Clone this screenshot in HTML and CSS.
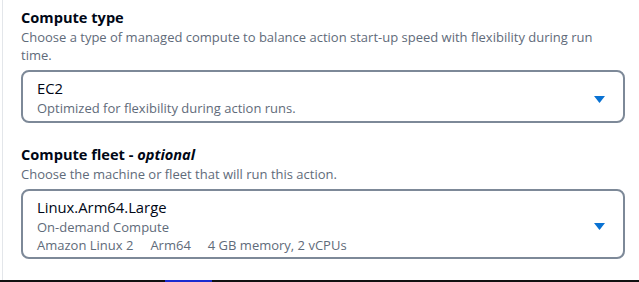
FILE: index.html
```html
<!DOCTYPE html>
<html>
<head>
<meta charset="utf-8">
<link rel="stylesheet" href="styles.css">
</head>
<body>
<div class="page">
  <div class="panel">
    <div class="field">
      <div class="label">Compute type</div>
      <div class="desc">Choose a type of managed compute to balance action start-up speed with flexibility during run time.</div>
      <div class="select one">
        <div class="opt">
          <div class="opt-title">EC2</div>
          <div class="opt-sub">Optimized for flexibility during action runs.</div>
        </div>
        <svg class="caret" width="11" height="7" viewBox="0 0 11 7"><polygon points="0,0 11,0 5.5,7" fill="#0972d3"/></svg>
      </div>
    </div>
    <div class="field second">
      <div class="label">Compute fleet - <i>optional</i></div>
      <div class="desc">Choose the machine or fleet that will run this action.</div>
      <div class="select two">
        <div class="opt">
          <div class="opt-title">Linux.Arm64.Large</div>
          <div class="opt-sub">On-demand Compute</div>
          <div class="opt-tags"><span>Amazon Linux 2</span><span>Arm64</span><span>4 GB memory, 2 vCPUs</span></div>
        </div>
        <svg class="caret" width="11" height="7" viewBox="0 0 11 7"><polygon points="0,0 11,0 5.5,7" fill="#0972d3"/></svg>
      </div>
    </div>
  </div>
  <div class="bottom"><span class="seg a"></span><span class="seg b"></span></div>
</div>
</body>
</html>
```
FILE: styles.css
```css
html, body { margin: 0; padding: 0; background: #ffffff; }
body { font-family: "Open Sans", "Noto Sans", sans-serif; color: #000716; width: 639px; height: 282px; overflow: hidden; }
.page { display: flex; flex-direction: column; height: 282px; }
.panel { flex: 1; margin-left: 2px; border-left: 1px solid #e3e6ea; padding: 7px 14px 0 18px; }
.field { display: flex; flex-direction: column; }
.field.second { margin-top: 21px; }
.label { font-size: 14.6px; font-weight: 700; line-height: 20px; }
.label i { font-weight: 700; }
.desc { font-size: 13px; color: #5f6b7a; line-height: 18px; margin-top: 1px; padding-right: 20px; }
.select { margin-top: 6px; border: 2px solid #7d8998; border-radius: 8px; display: flex; align-items: center; padding: 6px 18px 3px 14px; }
.select.two { padding-bottom: 4px; }
.opt { flex: 1; }
.opt-title { font-size: 14.8px; line-height: 20px; }
.opt-sub { font-size: 13px; color: #5f6b7a; line-height: 20px; }
.opt-tags { font-size: 13px; color: #5f6b7a; line-height: 16px; display: flex; gap: 17px; }
.caret { display: block; margin-top: 2px; }
.bottom { height: 2px; background: #111; display: flex; }
.seg.a { width: 165px; }
.seg.b { width: 47px; background: #1a2bd0; }
```
